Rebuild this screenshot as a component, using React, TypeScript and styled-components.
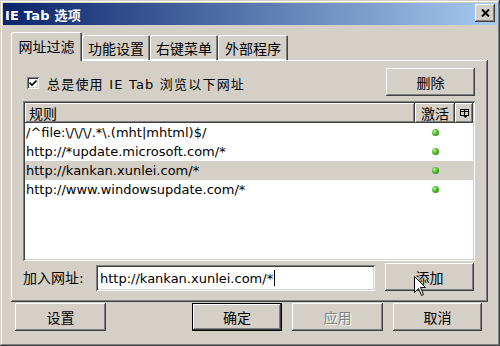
import React from "react";
import styled, { createGlobalStyle, css } from "styled-components";

const Global = createGlobalStyle`
  html, body { margin: 0; padding: 0; background: #d4d0c8; }
  * { box-sizing: border-box; }
  body { font-family: "DejaVu Sans", "Noto Sans CJK SC", sans-serif; }
`;

const FONT = `"DejaVu Sans", "Noto Sans CJK SC", sans-serif`;

const raised = css`
  box-shadow: inset -1px -1px #404040, inset 1px 1px #ffffff,
    inset -2px -2px #808080, inset 2px 2px #d4d0c8;
`;

const sunken = css`
  box-shadow: inset 1px 1px #808080, inset -1px -1px #ffffff,
    inset 2px 2px #404040, inset -2px -2px #d4d0c8;
`;

const Window = styled.div`
  position: relative;
  width: 500px;
  height: 346px;
  background: #d4d0c8;
  padding: 3px;
  display: flex;
  flex-direction: column;
  box-shadow: inset -1px -1px #404040, inset 1px 1px #d4d0c8,
    inset -2px -2px #808080, inset 2px 2px #ffffff;
  font-family: ${FONT};
  color: #000;
`;

const TitleBar = styled.div`
  height: 22px;
  display: flex;
  align-items: center;
  justify-content: space-between;
  padding: 0 2px 0 2px;
  background: linear-gradient(to right, #0a246a, #a6caf0);
`;

const TitleText = styled.span`
  color: #fff;
  font-weight: bold;
  font-size: 13px;
  letter-spacing: 0.2px;
`;

const CloseBtn = styled.div`
  width: 20px;
  height: 18px;
  margin-top: -2px;
  background: #d4d0c8;
  ${raised};
  display: flex;
  align-items: center;
  justify-content: center;
`;

const TabStrip = styled.div`
  margin: 7px 0 0 8px;
  height: 28px;
  display: flex;
  align-items: flex-end;
`;

const Tab = styled.div<{ $active?: boolean; $w: number }>`
  position: relative;
  z-index: 2;
  width: ${(p) => p.$w}px;
  background: #d4d0c8;
  font-size: 14px;
  white-space: nowrap;
  display: flex;
  align-items: center;
  justify-content: center;
  border-radius: 2px 2px 0 0;
  ${(p) =>
    p.$active
      ? css`
          height: 29px;
          margin-bottom: -1px;
          padding-bottom: 2px;
          box-shadow: inset 1px 1px #ffffff, inset -1px 0 #404040,
            inset -2px 0 #808080;
        `
      : css`
          height: 25px;
          box-shadow: inset 1px 1px #ffffff, inset -1px 0 #404040,
            inset -2px 0 #808080, inset 0 -1px #ffffff;
        `}
`;

const Panel = styled.div`
  position: relative;
  z-index: 1;
  margin: 0 9px 0 8px;
  height: 242px;
  padding: 8px 13px 0 12px;
  display: flex;
  flex-direction: column;
  box-shadow: inset -1px -1px #404040, inset 1px 1px #ffffff,
    inset -2px -2px #808080;
`;

const TopRow = styled.div`
  height: 28px;
  display: flex;
  align-items: center;
  justify-content: space-between;
`;

const CheckLabel = styled.label`
  display: flex;
  align-items: center;
  gap: 8px;
  margin-left: 4px;
  margin-top: 2px;
  font-size: 13px;
  letter-spacing: 1.2px;
`;

const CheckBox = styled.span`
  width: 12px;
  height: 12px;
  background: #fff;
  ${sunken};
  display: flex;
  align-items: center;
  justify-content: center;
`;

const Button = styled.div<{ $default?: boolean; $disabled?: boolean; $w?: number }>`
  width: ${(p) => p.$w ?? 90}px;
  height: 28px;
  background: #d4d0c8;
  display: flex;
  align-items: center;
  justify-content: center;
  font-size: 14px;
  ${(p) =>
    p.$default
      ? css`
          box-shadow: inset -1px -1px #000, inset 1px 1px #000,
            inset -2px -2px #404040, inset 2px 2px #ffffff,
            inset -3px -3px #808080;
        `
      : raised};
  ${(p) =>
    p.$disabled &&
    css`
      color: #808080;
      text-shadow: 1px 1px #ffffff;
    `}
`;

const List = styled.div`
  margin-top: 5px;
  height: 160px;
  padding: 2px;
  background: #fff;
  ${sunken};
  display: flex;
  flex-direction: column;
`;

const cols = css`
  display: grid;
  grid-template-columns: 1fr 40px 18px;
`;

const Header = styled.div`
  ${cols};
  height: 20px;
  background: #d4d0c8;
`;

const HeadCell = styled.div<{ $center?: boolean }>`
  ${raised};
  font-size: 14px;
  display: flex;
  align-items: center;
  justify-content: ${(p) => (p.$center ? "center" : "flex-start")};
  padding-left: ${(p) => (p.$center ? 0 : 4)}px;
`;

const Row = styled.div<{ $sel?: boolean }>`
  ${cols};
  height: 19px;
  align-items: center;
  background: ${(p) => (p.$sel ? "#d4d0c8" : "#ffffff")};
  font-size: 13px;
`;

const RuleText = styled.span`
  padding-left: 1px;
  white-space: nowrap;
`;

const DotCell = styled.span`
  display: flex;
  justify-content: center;
`;

const Dot = styled.span`
  width: 7px;
  height: 7px;
  border-radius: 50%;
  background: radial-gradient(circle at 35% 35%, #b8f09a 0%, #4cba2c 45%, #1f7a12 100%);
`;

const InputRow = styled.div`
  margin-top: 2px;
  height: 28px;
  display: flex;
  align-items: center;
`;

const InputLabel = styled.span`
  font-size: 14px;
  width: 73px;
  white-space: nowrap;
`;

const Input = styled.div`
  width: 279px;
  height: 26px;
  margin-top: 2px;
  margin-right: 10px;
  background: #fff;
  ${sunken};
  font-size: 13px;
  display: flex;
  align-items: center;
  padding-left: 4px;
`;

const Caret = styled.span`
  display: inline-block;
  width: 1px;
  height: 16px;
  background: #000;
  margin-left: 1px;
`;

const BottomRow = styled.div`
  margin: 1px 15px 0 12px;
  display: flex;
  justify-content: space-between;
`;

const RightBtns = styled.div`
  display: flex;
  gap: 10px;
`;

const Cursor = styled.svg`
  position: absolute;
  left: 414px;
  top: 276px;
  z-index: 5;
`;

const rules = [
  "/^file:\\/\\/\\/.*\\.(mht|mhtml)$/",
  "http://*update.microsoft.com/*",
  "http://kankan.xunlei.com/*",
  "http://www.windowsupdate.com/*",
];

export default function App() {
  return (
    <Window>
      <Global />
      <TitleBar>
        <TitleText>IE Tab 选项</TitleText>
        <CloseBtn>
          <svg width="9" height="8" viewBox="0 0 9 8">
            <path d="M1 0.5 L8 7.5 M8 0.5 L1 7.5" stroke="#000" strokeWidth="2" />
          </svg>
        </CloseBtn>
      </TitleBar>
      <TabStrip>
        <Tab $active $w={71}>网址过滤</Tab>
        <Tab $w={68}>功能设置</Tab>
        <Tab $w={68}>右键菜单</Tab>
        <Tab $w={70}>外部程序</Tab>
      </TabStrip>
      <Panel>
        <TopRow>
          <CheckLabel>
            <CheckBox>
              <svg width="8" height="8" viewBox="0 0 8 8">
                <path d="M0.5 3.5 L3 6 L7.5 1.5" stroke="#000" strokeWidth="1.6" fill="none" />
              </svg>
            </CheckBox>
            总是使用 IE Tab 浏览以下网址
          </CheckLabel>
          <Button $w={89}>删除</Button>
        </TopRow>
        <List>
          <Header>
            <HeadCell>规则</HeadCell>
            <HeadCell $center>激活</HeadCell>
            <HeadCell $center>
              <svg width="9" height="9" viewBox="0 0 9 9">
                <rect x="0.5" y="0.5" width="8" height="6" fill="none" stroke="#000" />
                <path d="M0.5 2.5 H8.5 M4.5 0.5 V6.5" stroke="#000" />
                <path d="M3 6.5 H8 L5.5 9 Z" fill="#000" />
              </svg>
            </HeadCell>
          </Header>
          {rules.map((r, i) => (
            <Row key={r} $sel={i === 2}>
              <RuleText>{r}</RuleText>
              <DotCell>
                <Dot />
              </DotCell>
              <span />
            </Row>
          ))}
        </List>
        <InputRow>
          <InputLabel>加入网址:</InputLabel>
          <Input>
            http://kankan.xunlei.com/*
            <Caret />
          </Input>
          <Button $w={89}>添加</Button>
        </InputRow>
      </Panel>
      <BottomRow>
        <Button $w={91}>设置</Button>
        <RightBtns>
          <Button $default>确定</Button>
          <Button $disabled $w={91}>应用</Button>
          <Button $w={89}>取消</Button>
        </RightBtns>
      </BottomRow>
      <Cursor width="13" height="21" viewBox="0 0 13 21">
        <path
          d="M0.5 0.5 L0.5 16.5 L4.5 12.5 L7.5 19.5 L9.5 18.5 L6.5 11.5 L11.5 11.5 Z"
          fill="#fff"
          stroke="#000"
          strokeWidth="1"
        />
      </Cursor>
    </Window>
  );
}
